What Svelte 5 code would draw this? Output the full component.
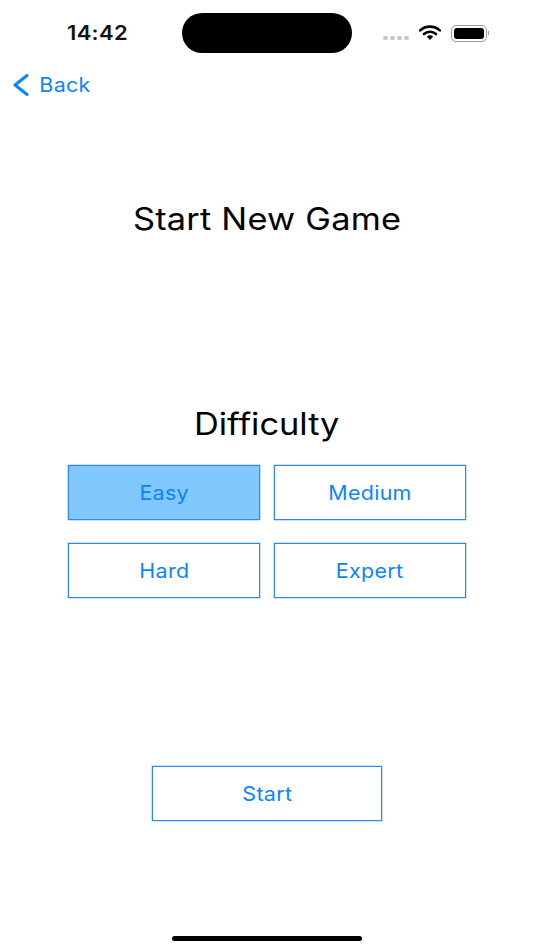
<script>
  let levels = ['Easy', 'Medium', 'Hard', 'Expert'];
  let selected = 'Easy';
</script>

<div class="screen">
  <div class="status-bar">
    <div class="time-slot"><span class="time">14:42</span></div>
    <div class="island"></div>
    <div class="status-icons">
      <div class="signal">
        <i></i><i></i><i></i><i></i>
      </div>
      <svg class="wifi" width="22" height="15" viewBox="0 0 22 15">
        <path d="M1.2 5.4 A14.5 14.5 0 0 1 20.8 5.4" fill="none" stroke="#000" stroke-width="2.6" stroke-linecap="round" />
        <path d="M5 9 A9 9 0 0 1 17 9" fill="none" stroke="#000" stroke-width="2.6" stroke-linecap="round" />
        <path d="M7.8 11.6 A4.8 4.8 0 0 1 14.2 11.6 L11 15 Z" fill="#000" />
      </svg>
      <div class="battery"><div class="level"></div></div>
      <div class="cap"></div>
    </div>
  </div>

  <div class="nav">
    <button class="back">
      <svg width="17" height="22" viewBox="0 0 17 22">
        <path d="M15 1.5 L3 11 L15 20.5" fill="none" stroke="#0a84ff" stroke-width="3" stroke-linecap="round" stroke-linejoin="round" />
      </svg>
      <span class="label">Back</span>
    </button>
  </div>

  <h1 class="title"><span class="wide">Start New Game</span></h1>

  <h2 class="subtitle"><span class="wide">Difficulty</span></h2>

  <div class="levels">
    {#each levels as level}
      <button class="option" class:selected={selected === level} onclick={() => (selected = level)}>
        <span class="label">{level}</span>
      </button>
    {/each}
  </div>

  <button class="option start"><span class="label">Start</span></button>

  <div class="home-indicator"></div>
</div>

<style>
  :global(body) {
    margin: 0;
    background: #fff;
    font-family: Inter, 'Liberation Sans', sans-serif;
  }

  .screen {
    width: 534px;
    height: 950px;
    overflow: hidden;
    display: flex;
    flex-direction: column;
    align-items: center;
    background: #fff;
  }

  .status-bar {
    width: 100%;
    box-sizing: border-box;
    height: 66px;
    padding: 13px 0 0 67px;
    display: flex;
    align-items: flex-start;
  }

  .time-slot {
    width: 115px;
    height: 40px;
    line-height: 40px;
  }

  .time {
    display: inline-block;
    transform: scaleX(1.1);
    transform-origin: left center;
    font-size: 20px;
    font-weight: 600;
    letter-spacing: 0.3px;
    color: #111;
  }

  .island {
    width: 170px;
    height: 40px;
    border-radius: 20px;
    background: #000;
  }

  .status-icons {
    height: 40px;
    margin-left: 31px;
    display: flex;
    align-items: center;
  }

  .signal {
    display: flex;
    gap: 2px;
    margin-top: 9px;
  }

  .signal i {
    width: 5px;
    height: 4px;
    border-radius: 2px;
    background: #c8c8c8;
  }

  .wifi {
    margin: -1px 0 0 10px;
  }

  .battery {
    width: 30px;
    height: 11px;
    margin-left: 10px;
    padding: 2px;
    border: 1px solid #999;
    border-radius: 5px;
  }

  .level {
    height: 100%;
    border-radius: 3px;
    background: #000;
  }

  .cap {
    width: 1px;
    height: 4px;
    margin-left: 1px;
    background: #999;
  }

  .nav {
    width: 100%;
    height: 38px;
    box-sizing: border-box;
    padding-left: 12px;
    display: flex;
    align-items: center;
  }

  .back {
    display: flex;
    align-items: center;
    gap: 12px;
    padding: 0;
    border: none;
    background: none;
    color: #0a84ff;
    font: 400 20px Inter, 'Liberation Sans', sans-serif;
    letter-spacing: 0.3px;
  }

  .label {
    display: inline-block;
    transform: scaleX(1.07);
  }

  .wide {
    display: inline-block;
    transform: scaleX(1.108);
  }

  .title {
    margin: 94px 0 0;
    height: 42px;
    line-height: 42px;
    font-size: 31px;
    font-weight: 400;
    letter-spacing: 0.2px;
    color: #000;
  }

  .subtitle {
    margin: 163px 0 0;
    height: 42px;
    line-height: 42px;
    font-size: 31px;
    font-weight: 400;
    color: #000;
  }

  .levels {
    margin-top: 20px;
    display: grid;
    grid-template-columns: 192px 192px;
    grid-auto-rows: 55px;
    column-gap: 14px;
    row-gap: 23px;
  }

  .option {
    box-sizing: border-box;
    padding: 0;
    border: 1px solid #2f86f6;
    border-radius: 0;
    box-shadow: 0 0 0 0.5px rgba(47, 134, 246, 0.5);
    background: #fff;
    color: #0a84ff;
    font: 400 20px Inter, 'Liberation Sans', sans-serif;
    letter-spacing: 0.3px;
  }

  .option.selected {
    background: #80c8ff;
  }

  .start {
    width: 230px;
    height: 55px;
    margin-top: 168px;
    flex: none;
  }

  .home-indicator {
    width: 190px;
    height: 5px;
    margin-top: 115px;
    border-radius: 3px;
    background: #000;
    flex: none;
  }
</style>
